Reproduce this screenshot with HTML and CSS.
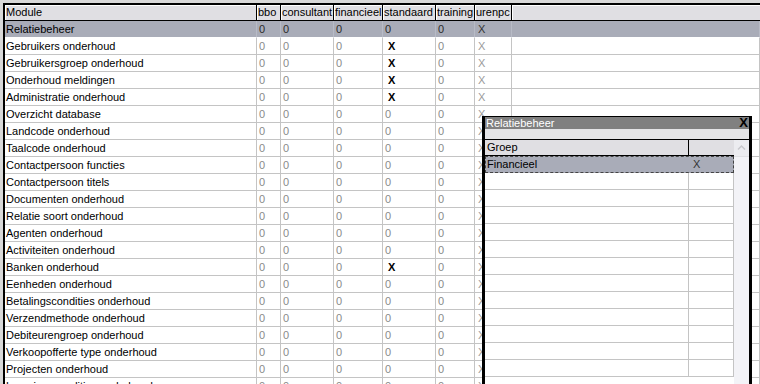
FILE: index.html
```html
<!DOCTYPE html>
<html lang="nl">
<head>
    <meta charset="UTF-8">
    <title>Rechten per groep</title>
    <link rel="stylesheet" href="styles.css">
</head>
<body>
    <!-- Main rights grid -->
    <div class="grid">
        <div class="row head"><div>Module</div><div>bbo</div><div>consultant</div><div>financieel</div><div>standaard</div><div>training</div><div>urenpc</div><div></div></div>
        <div class="row sel"><div>Relatiebeheer</div><div>0</div><div>0</div><div>0</div><div>0</div><div>0</div><div class="u">X</div><div></div></div>
        <div class="row"><div class="mod">Gebruikers onderhoud</div><div>0</div><div>0</div><div>0</div><div class="x">X</div><div>0</div><div class="u">X</div><div></div></div>
        <div class="row"><div class="mod">Gebruikersgroep onderhoud</div><div>0</div><div>0</div><div>0</div><div class="x">X</div><div>0</div><div class="u">X</div><div></div></div>
        <div class="row"><div class="mod">Onderhoud meldingen</div><div>0</div><div>0</div><div>0</div><div class="x">X</div><div>0</div><div class="u">X</div><div></div></div>
        <div class="row"><div class="mod">Administratie onderhoud</div><div>0</div><div>0</div><div>0</div><div class="x">X</div><div>0</div><div class="u">X</div><div></div></div>
        <div class="row"><div class="mod">Overzicht database</div><div>0</div><div>0</div><div>0</div><div>0</div><div>0</div><div class="u">X</div><div></div></div>
        <div class="row"><div class="mod">Landcode onderhoud</div><div>0</div><div>0</div><div>0</div><div>0</div><div>0</div><div class="u">X</div><div></div></div>
        <div class="row"><div class="mod">Taalcode onderhoud</div><div>0</div><div>0</div><div>0</div><div>0</div><div>0</div><div class="u">X</div><div></div></div>
        <div class="row"><div class="mod">Contactpersoon functies</div><div>0</div><div>0</div><div>0</div><div>0</div><div>0</div><div class="u">X</div><div></div></div>
        <div class="row"><div class="mod">Contactpersoon titels</div><div>0</div><div>0</div><div>0</div><div>0</div><div>0</div><div class="u">X</div><div></div></div>
        <div class="row"><div class="mod">Documenten onderhoud</div><div>0</div><div>0</div><div>0</div><div>0</div><div>0</div><div class="u">X</div><div></div></div>
        <div class="row"><div class="mod">Relatie soort onderhoud</div><div>0</div><div>0</div><div>0</div><div>0</div><div>0</div><div class="u">X</div><div></div></div>
        <div class="row"><div class="mod">Agenten onderhoud</div><div>0</div><div>0</div><div>0</div><div>0</div><div>0</div><div class="u">X</div><div></div></div>
        <div class="row"><div class="mod">Activiteiten onderhoud</div><div>0</div><div>0</div><div>0</div><div>0</div><div>0</div><div class="u">X</div><div></div></div>
        <div class="row"><div class="mod">Banken onderhoud</div><div>0</div><div>0</div><div>0</div><div class="x">X</div><div>0</div><div class="u">X</div><div></div></div>
        <div class="row"><div class="mod">Eenheden onderhoud</div><div>0</div><div>0</div><div>0</div><div>0</div><div>0</div><div class="u">X</div><div></div></div>
        <div class="row"><div class="mod">Betalingscondities onderhoud</div><div>0</div><div>0</div><div>0</div><div>0</div><div>0</div><div class="u">X</div><div></div></div>
        <div class="row"><div class="mod">Verzendmethode onderhoud</div><div>0</div><div>0</div><div>0</div><div>0</div><div>0</div><div class="u">X</div><div></div></div>
        <div class="row"><div class="mod">Debiteurengroep onderhoud</div><div>0</div><div>0</div><div>0</div><div>0</div><div>0</div><div class="u">X</div><div></div></div>
        <div class="row"><div class="mod">Verkoopofferte type onderhoud</div><div>0</div><div>0</div><div>0</div><div>0</div><div>0</div><div class="u">X</div><div></div></div>
        <div class="row"><div class="mod">Projecten onderhoud</div><div>0</div><div>0</div><div>0</div><div>0</div><div>0</div><div class="u">X</div><div></div></div>
        <div class="row"><div class="mod">Leveringscondities onderhoud</div><div>0</div><div>0</div><div>0</div><div>0</div><div>0</div><div class="u">X</div><div></div></div>
    </div>

    <!-- Floating window: groups for the selected module -->
    <div class="popup">
        <div class="ptitle"><span>Relatiebeheer</span><span class="pclose">X</span></div>
        <div class="pstrip"></div>
        <div class="pbody">
            <div class="pgrid">
                <div class="prow phead"><div>Groep</div><div></div></div>
                <div class="prow psel"><div>Financieel</div><div>X</div></div>
                <div class="prow"><div></div><div></div></div>
                <div class="prow"><div></div><div></div></div>
                <div class="prow"><div></div><div></div></div>
                <div class="prow"><div></div><div></div></div>
                <div class="prow"><div></div><div></div></div>
                <div class="prow"><div></div><div></div></div>
                <div class="prow"><div></div><div></div></div>
                <div class="prow"><div></div><div></div></div>
                <div class="prow"><div></div><div></div></div>
                <div class="prow"><div></div><div></div></div>
                <div class="prow"><div></div><div></div></div>
                <div class="prow"><div></div><div></div></div>
            </div>
            <div class="pscroll">
                <div class="pup">
                    <svg width="15" height="16" viewBox="0 0 15 16"><path d="M4 9.5 L7.5 6 L11 9.5" fill="none" stroke="#c8c8cc" stroke-width="1.5"/></svg>
                </div>
            </div>
        </div>
    </div>
</body>
</html>
```

FILE: styles.css
```css
body {
    margin: 0;
    height: 384px;
    overflow: hidden;
    background-color: #d8d8d8;
    font-family: "Liberation Sans", Arial, sans-serif;
    font-size: 11px;
}
.grid {
    margin: 3px 0 0 3px;
    border-top: 2px solid #000;
    border-left: 2px solid #000;
    background-color: #fff;
}
.row {
    display: grid;
    grid-template-columns: 252px 24px 53px 49px 53px 39px 37px 1fr;
}
.row > div {
    box-sizing: border-box;
    height: 17px;
    padding-left: 2px;
    line-height: 16px;
    border-right: 1px solid #c4c4c4;
    border-bottom: 1px solid #c4c4c4;
    color: #8a8a8a;
    white-space: nowrap;
    overflow: hidden;
}
.row > .mod {
    color: #000;
    padding-left: 1px;
}
.row > .x {
    color: #000;
    font-weight: bold;
    padding-left: 5px;
}
.row > .u {
    color: #9a9a9a;
    padding-left: 3px;
}
.head > div {
    height: 16px;
    line-height: 15px;
    padding-left: 1px;
    background-color: #e0dfe3;
    border-right: 1px solid #000;
    border-bottom: 1px solid #000;
    box-shadow: inset 1px 1px #fff;
    color: #000;
}
.head > div:last-child {
    border-right: none;
}
.sel > div {
    background-color: #a9acb8;
    border-right-color: #b8bbc6;
    border-bottom-color: #fff;
    color: #2a2a2a;
}
.sel > div:first-child {
    color: #000;
    padding-left: 1px;
}
.sel > .u {
    color: #333;
}

/* floating window */
.popup {
    position: absolute;
    left: 482px;
    top: 116px;
    width: 270px;
    height: 280px;
    box-sizing: border-box;
    border: 3px solid #000;
    border-top: 1px solid #000;
    background-color: #fff;
    display: flex;
    flex-direction: column;
}
.ptitle {
    height: 12px;
    line-height: 12px;
    padding-left: 1px;
    background-color: #808080;
    color: #fff;
    display: flex;
    justify-content: space-between;
}
.pclose {
    color: #000;
    font-weight: bold;
    font-size: 13px;
    padding-right: 1px;
}
.pstrip {
    height: 10px;
    background-color: #e4e4e6;
}
.pbody {
    flex: 1;
    display: flex;
    border-top: 1px solid #000;
}
.pgrid {
    flex: 1;
}
.prow {
    display: grid;
    grid-template-columns: 204px 45px;
}
.prow > div {
    box-sizing: border-box;
    height: 17px;
    line-height: 16px;
    padding-left: 2px;
    border-right: 1px solid #c4c4c4;
    border-bottom: 1px solid #c4c4c4;
}
.phead > div {
    height: 16px;
    line-height: 15px;
    padding-left: 2px;
    background-color: #e0dfe3;
    border-right: 1px solid #000;
    border-bottom: 1px solid #000;
}
.phead > div:last-child {
    border-right: none;
}
.psel {
    outline: 1px dashed #444;
    outline-offset: -1px;
}
.psel > div {
    background-color: #a9acb8;
    border-right-color: transparent;
    border-bottom-color: #a9acb8;
    color: #000;
}
.psel > div:last-child {
    padding-left: 4px;
    color: #333;
}
.pscroll {
    width: 15px;
    background-color: #f3f3f7;
}
.pup {
    height: 16px;
    background-color: #ececf0;
    border-bottom: 1px solid #e0e0e4;
}
.pup svg {
    display: block;
}
```
